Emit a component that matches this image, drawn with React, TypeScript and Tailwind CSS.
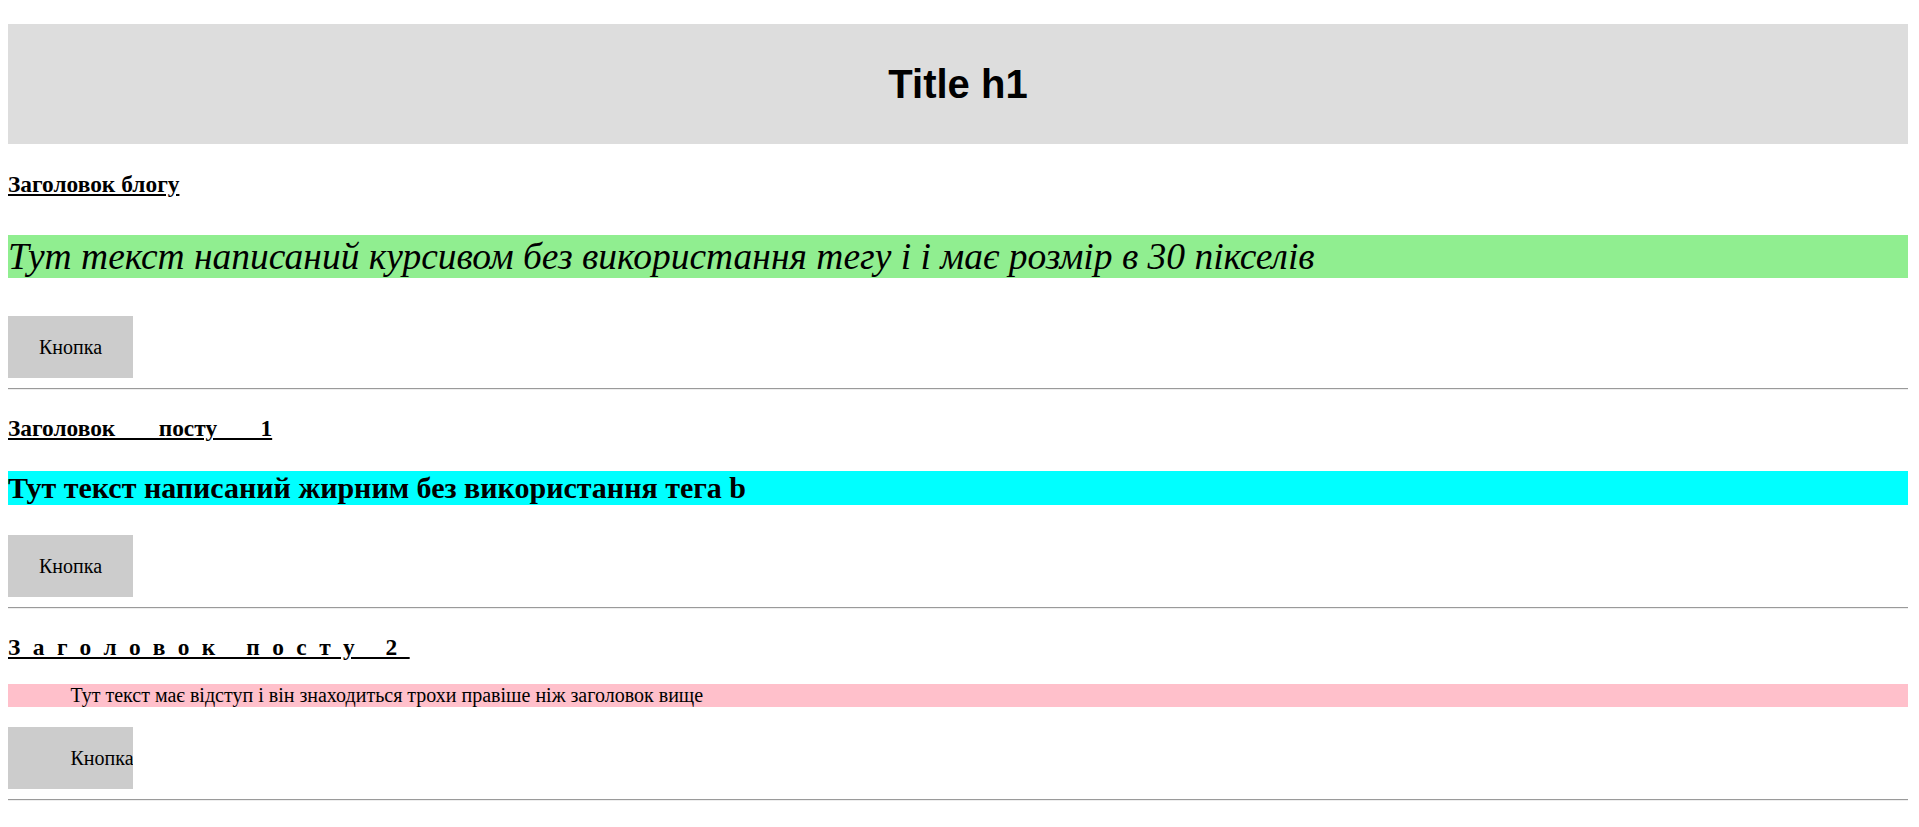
export default function App() {
  return (
    <main className="min-h-screen bg-white text-black pl-[8px] pr-[11px] pt-[24px] font-['Liberation_Serif','Times_New_Roman',serif]">
      {/* Header */}
      <header className="h-[120px] bg-[#dddddd] flex items-center justify-center">
        <h1 className="font-['Liberation_Sans',Arial,sans-serif] font-bold text-[40px] leading-none">
          Title h1
        </h1>
      </header>

      {/* Blog */}
      <h3 className="mt-[27px] text-[23.4px] leading-[27px] font-bold underline">Заголовок блогу</h3>
      <p className="mt-[37px] bg-[#90ee90] italic text-[37.5px] leading-[43px]">
        Тут текст написаний курсивом без використання тегу і і має розмір в 30 пікселів
      </p>
      <button className="mt-[38px] block w-[125px] h-[62px] bg-[#cccccc] text-[20px] text-center">
        Кнопка
      </button>
      <hr className="mt-[10px] border-0 border-t border-t-[#9a9a9a] border-b border-b-[#eeeeee]" />

      {/* Post 1 */}
      <h3 className="mt-[25px] text-[23.4px] leading-[27px] font-bold underline [word-spacing:37.5px]">
        Заголовок посту 1
      </h3>
      <p className="mt-[29px] bg-[#00ffff] font-bold text-[30px] leading-[34px]">
        Тут текст написаний жирним без використання тега b
      </p>
      <button className="mt-[30px] block w-[125px] h-[62px] bg-[#cccccc] text-[20px] text-center">
        Кнопка
      </button>
      <hr className="mt-[10px] border-0 border-t border-t-[#9a9a9a] border-b border-b-[#eeeeee]" />

      {/* Post 2 */}
      <h3 className="mt-[25px] text-[23.4px] leading-[27px] font-bold underline tracking-[12.5px]">
        Заголовок посту 2
      </h3>
      <p className="mt-[23px] bg-[#ffc0cb] text-[20px] leading-[23px] indent-[62.5px]">
        Тут текст має відступ і він знаходиться трохи правіше ніж заголовок вище
      </p>
      <button className="mt-[20px] block w-[125px] h-[62px] bg-[#cccccc] text-[20px] text-left indent-[62.5px] whitespace-nowrap overflow-hidden">
        Кнопка
      </button>
      <hr className="mt-[10px] border-0 border-t border-t-[#9a9a9a] border-b border-b-[#eeeeee]" />
    </main>
  );
}
